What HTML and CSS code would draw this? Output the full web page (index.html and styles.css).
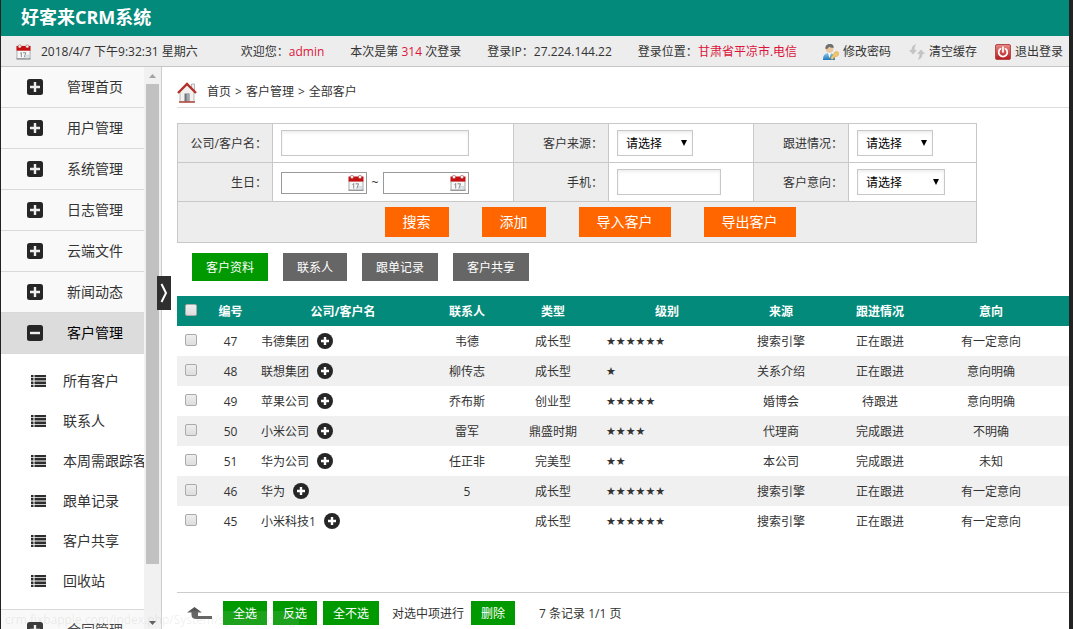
FILE: index.html
```html
<!DOCTYPE html>
<html lang="zh-CN">
<head>
<meta charset="utf-8">
<title>好客来CRM系统</title>
<link rel="stylesheet" href="styles.css">
</head>
<body>
<svg class="sprite" aria-hidden="true">
  <defs>
    <linearGradient id="blue" x1="0" y1="0" x2="0" y2="1"><stop offset="0" stop-color="#8cc8ec"/><stop offset="1" stop-color="#1d78bd"/></linearGradient>
    <linearGradient id="red" x1="0" y1="0" x2="0" y2="1"><stop offset="0" stop-color="#e98b86"/><stop offset="1" stop-color="#b5191d"/></linearGradient>
  </defs>
  <symbol id="calendar" viewBox="0 0 16 16">
    <path d="M1 6h14v9.500H1z" fill="#f7f7f7" stroke="#aaa" stroke-width="1"/>
    <path d="M.5 14.500h15v1.500H.5z" fill="#999"/>
    <path d="M.5 1.500h15V6.500H.5z" fill="#c60d10"/>
    <circle cx="4" cy="2" r="1.700" fill="#eee" stroke="#a33" stroke-width=".5"/>
    <circle cx="12" cy="2" r="1.700" fill="#eee" stroke="#a33" stroke-width=".5"/>
    <path d="M4.500 9.500l1.200-1v5M7.500 8.800h3l-1.700 4.700" fill="none" stroke="#888"/>
    <path d="M10 11.500h4v3h-4z" fill="#dde6ea" stroke="#b8c6cc" stroke-width=".5"/>
  </symbol>
  <symbol id="plus-box" viewBox="0 0 16 16"><rect width="16" height="16" rx="2.500" fill="#262626"/><path d="M8 3v10M3 8h10" stroke="#eee" stroke-width="2.400"/></symbol>
  <symbol id="minus-box" viewBox="0 0 16 16"><rect width="16" height="16" rx="2.500" fill="#262626"/><path d="M3 8h10" stroke="#eee" stroke-width="2.400"/></symbol>
  <symbol id="list" viewBox="0 0 15 12"><path d="M0 1h2.500M0 4.300h2.500M0 7.700h2.500M0 11h2.500M3.500 1H15M3.500 4.300H15M3.500 7.700H15M3.500 11H15" stroke="#2d2d2d" stroke-width="2.400"/></symbol>
  <symbol id="plus-round" viewBox="0 0 16 16"><circle cx="8" cy="8" r="8" fill="#262626"/><path d="M8 4v8M4 8h8" stroke="#fff" stroke-width="2.400"/></symbol>
</svg>
<div class="page">
  <header class="brand"><h1>好客来CRM系统</h1></header>
  <div class="toolbar">
    <div class="clock"><svg class="i14"><use href="#calendar"/></svg><span>2018/4/7 下午9:32:31 星期六</span></div>
    <span>欢迎您：<em>admin</em></span>
    <span>本次是第 <em>314</em> 次登录</span>
    <span>登录IP：27.224.144.22</span>
    <span>登录位置：<em>甘肃省平凉市.电信</em></span>
    <nav class="tools">
      <a href="#"><svg class="i16" viewBox="0 0 16 16"><path d="M0 16c0-5 2-7 6-7s6 2 6 7z" fill="url(#blue)"/><path d="M5 9l1.500 5L8 9z" fill="#fff"/><circle cx="6.500" cy="5" r="3.800" fill="#edc79d"/><path d="M2.500 5C2 1.500 4 0 7 0s4 2 3.500 4C8 4 7 3 6 2.800 5 5 4 5 2.500 5z" fill="#6c706e"/><path d="M8 13l3-3c0-2 2-3 4-2 2 2 0 5-3 4.500L9.500 15.500 8 15z" fill="#f2c56b" stroke="#d39b3e" stroke-width=".5"/></svg>修改密码</a>
      <a href="#"><svg class="i16" viewBox="0 0 16 16"><path d="M7 0C4 1 2.500 3 2.500 6H0l4 4.500L8 6H5.500C5.500 4 6 2 7 0z" fill="#c4c4c4"/><path d="M9 16c3-1 4.500-3 4.500-6H16l-4-4.500L8 10h2.500c0 2-.5 4-1.500 6z" fill="#c4c4c4"/></svg>清空缓存</a>
      <a href="#"><svg class="i16" viewBox="0 0 16 16"><rect x=".5" y=".5" width="15" height="15" rx="1.500" fill="url(#red)" stroke="#b54a4a"/><path d="M5.500 4.800a4.300 4.300 0 1 0 5 0M8 3v5" fill="none" stroke="#fff" stroke-width="1.700" stroke-linecap="round"/></svg>退出登录</a>
    </nav>
  </div>
  <div class="body">
    <aside class="side">
      <nav class="menu">
        <a class="group" href="#"><svg class="i16"><use href="#plus-box"/></svg>管理首页</a>
        <a class="group" href="#"><svg class="i16"><use href="#plus-box"/></svg>用户管理</a>
        <a class="group" href="#"><svg class="i16"><use href="#plus-box"/></svg>系统管理</a>
        <a class="group" href="#"><svg class="i16"><use href="#plus-box"/></svg>日志管理</a>
        <a class="group" href="#"><svg class="i16"><use href="#plus-box"/></svg>云端文件</a>
        <a class="group" href="#"><svg class="i16"><use href="#plus-box"/></svg>新闻动态</a>
        <a class="group open" href="#"><svg class="i16"><use href="#minus-box"/></svg>客户管理</a>
        <div class="sub">
          <a href="#"><svg><use href="#list"/></svg>所有客户</a>
          <a href="#"><svg><use href="#list"/></svg>联系人</a>
          <a href="#"><svg><use href="#list"/></svg>本周需跟踪客户</a>
          <a href="#"><svg><use href="#list"/></svg>跟单记录</a>
          <a href="#"><svg><use href="#list"/></svg>客户共享</a>
          <a href="#"><svg><use href="#list"/></svg>回收站</a>
        </div>
        <a class="group" href="#"><svg class="i16"><use href="#plus-box"/></svg>合同管理</a>
      </nav>
      <div class="scroll">
        <svg viewBox="0 0 17 17"><path d="M5 11l3.500-4L12 11z" fill="#a3a3a3"/></svg>
        <div class="rail"><div class="thumb"></div></div>
        <svg viewBox="0 0 17 17"><path d="M5 9l3.500 4L12 9z" fill="#505050"/></svg>
      </div>
      <button class="handle" type="button" aria-label="收起"><svg viewBox="0 0 14 34"><path d="M4.500 8l4.500 9-4.500 9" fill="none" stroke="#fff" stroke-width="2"/></svg></button>
    </aside>
    <main class="main">
      <div class="crumbs">
        <svg viewBox="0 0 20 21"><path d="M14.500 2h3v6h-3z" fill="#eee" stroke="#999" stroke-width=".7"/><path d="M3 10l7-7 7 7v10H3z" fill="#f3f1ee" stroke="#aaa" stroke-width=".8"/><path d="M7.500 11.500h5V20h-5z" fill="#6f757c"/><path d="M9.500 12H12v8H9.500z" fill="#a1a7ad"/><path d="M1 11l9-9 9 9" fill="none" stroke="#b3312a" stroke-width="2.400"/><path d="M2 20h16" stroke="#b5483c" stroke-width="1.500"/></svg>
        <a href="#">首页</a><span>&gt;</span><a href="#">客户管理</a><span>&gt;</span><a href="#">全部客户</a>
      </div>
      <form class="filter">
        <table>
          <colgroup><col class="lab"><col class="f1"><col class="lab"><col class="f2"><col class="lab"><col class="f3"></colgroup>
          <tr>
            <th><label for="name">公司/客户名：</label></th><td><input class="box wide" id="name" type="text"></td>
            <th><label for="source">客户来源：</label></th><td><div class="pick"><select id="source"><option>请选择</option></select></div></td>
            <th><label for="follow">跟进情况：</label></th><td><div class="pick"><select id="follow"><option>请选择</option></select></div></td>
          </tr>
          <tr>
            <th><label for="from">生日：</label></th>
            <td><div class="range"><span class="date"><input id="from" type="text"><svg><use href="#calendar"/></svg></span><span class="to">~</span><span class="date"><input type="text" aria-label="生日至"><svg><use href="#calendar"/></svg></span></div></td>
            <th><label for="phone">手机：</label></th><td><input class="box short" id="phone" type="text"></td>
            <th><label for="intent">客户意向：</label></th><td><div class="pick"><select class="long" id="intent"><option>请选择</option></select></div></td>
          </tr>
          <tr><td class="actions" colspan="6"><div><button type="button">搜索</button><button type="button">添加</button><button type="button">导入客户</button><button type="button">导出客户</button></div></td></tr>
        </table>
      </form>
      <div class="tabs"><button class="on" type="button">客户资料</button><button type="button">联系人</button><button type="button">跟单记录</button><button type="button">客户共享</button></div>
      <table class="grid">
        <colgroup><col class="c-check"><col class="c-id"><col class="c-name"><col class="c-person"><col class="c-type"><col class="c-level"><col class="c-type"><col class="c-state"><col class="c-intent"><col class="c-end"></colgroup>
        <thead><tr><th><input type="checkbox" aria-label="全选"></th><th>编号</th><th>公司/客户名</th><th>联系人</th><th>类型</th><th>级别</th><th>来源</th><th>跟进情况</th><th>意向</th><th></th></tr></thead>
        <tbody>
          <tr><td><input type="checkbox" aria-label="47"></td><td>47</td><td class="name"><div>韦德集团<svg class="i16"><use href="#plus-round"/></svg></div></td><td>韦德</td><td>成长型</td><td class="stars">★★★★★★</td><td>搜索引擎</td><td>正在跟进</td><td>有一定意向</td><td></td></tr>
          <tr><td><input type="checkbox" aria-label="48"></td><td>48</td><td class="name"><div>联想集团<svg class="i16"><use href="#plus-round"/></svg></div></td><td>柳传志</td><td>成长型</td><td class="stars">★</td><td>关系介绍</td><td>正在跟进</td><td>意向明确</td><td></td></tr>
          <tr><td><input type="checkbox" aria-label="49"></td><td>49</td><td class="name"><div>苹果公司<svg class="i16"><use href="#plus-round"/></svg></div></td><td>乔布斯</td><td>创业型</td><td class="stars">★★★★★</td><td>婚博会</td><td>待跟进</td><td>意向明确</td><td></td></tr>
          <tr><td><input type="checkbox" aria-label="50"></td><td>50</td><td class="name"><div>小米公司<svg class="i16"><use href="#plus-round"/></svg></div></td><td>雷军</td><td>鼎盛时期</td><td class="stars">★★★★</td><td>代理商</td><td>完成跟进</td><td>不明确</td><td></td></tr>
          <tr><td><input type="checkbox" aria-label="51"></td><td>51</td><td class="name"><div>华为公司<svg class="i16"><use href="#plus-round"/></svg></div></td><td>任正非</td><td>完美型</td><td class="stars">★★</td><td>本公司</td><td>完成跟进</td><td>未知</td><td></td></tr>
          <tr><td><input type="checkbox" aria-label="46"></td><td>46</td><td class="name"><div>华为<svg class="i16"><use href="#plus-round"/></svg></div></td><td>5</td><td>成长型</td><td class="stars">★★★★★★</td><td>搜索引擎</td><td>正在跟进</td><td>有一定意向</td><td></td></tr>
          <tr><td><input type="checkbox" aria-label="45"></td><td>45</td><td class="name"><div>小米科技1<svg class="i16"><use href="#plus-round"/></svg></div></td><td></td><td>成长型</td><td class="stars">★★★★★★</td><td>搜索引擎</td><td>正在跟进</td><td>有一定意向</td><td></td></tr>
        </tbody>
      </table>
      <footer class="bulk">
        <svg viewBox="0 0 26 12"><path d="M7.500 0L15 5.500h-4V9h14v3H9.500Q4.500 12 4.500 8V5.500H0z" fill="#555"/></svg>
        <button type="button">全选</button><button type="button">反选</button><button type="button">全不选</button>
        <span class="hint">对选中项进行</span><button type="button">删除</button>
        <span class="count">7 条记录 1/1 页</span>
      </footer>
    </main>
  </div>
  <div class="status">crm.fixbapple.com/index.php/System/system.config</div>
</div>
</body>
</html>
```
FILE: styles.css
```css
* { box-sizing: border-box; }
body {
  margin: 0;
  background: #222;
  color: #333;
  font: 12px/18px "Open Sans", "Noto Sans CJK SC", sans-serif;
}
button, input, select { font: inherit; color: inherit; margin: 0; }
button { border: 0; padding: 0; white-space: nowrap; cursor: pointer; }
a { color: inherit; text-decoration: none; }
em { color: #dc143c; font-style: normal; }
svg { display: block; flex: none; }
.sprite { position: absolute; width: 0; height: 0; }
.i14 { width: 15px; height: 16px; }
.i16 { width: 16px; height: 16px; }

.page {
  display: flex;
  flex-direction: column;
  height: 100vh;
  margin: 0 4px 0 1px;
  background: #fff;
  position: relative;
  overflow: hidden;
}
.brand { flex: none; height: 36px; padding: 0 20px; background: #048a7b; color: #fff; }
.brand h1 { margin: 0; font-size: 18px; line-height: 34px; font-weight: 700; }
.toolbar {
  flex: none;
  display: flex;
  align-items: center;
  gap: 26px;
  height: 31px;
  padding: 2px 7px 0 15px;
  border-bottom: 1px solid #c6c6c6;
  background: #ededed;
  white-space: nowrap;
}
.clock { display: flex; align-items: center; gap: 10px; margin-right: 17px; }
.tools { display: flex; gap: 18px; margin-left: auto; }
.tools a { display: flex; align-items: center; gap: 4px; }

.body { flex: 1; display: flex; min-height: 0; }
.side { flex: none; display: flex; width: 161px; position: relative; border-right: 1px solid #ccc; }
.menu { flex: 1; min-width: 0; overflow: hidden; font-size: 14px; white-space: nowrap; }
.group {
  display: flex;
  align-items: center;
  gap: 24px;
  height: 41px;
  padding-left: 26px;
  border-bottom: 1px solid #d9d9d9;
  background: #f9f9f9;
}
.group.open { background: #dcdcdc; color: #000; }
.sub { padding: 7px 0 8px; border-bottom: 1px solid #d9d9d9; }
.sub a { display: flex; align-items: center; gap: 17px; height: 40px; padding-left: 30px; }
.sub svg { width: 15px; height: 12px; }
.scroll { flex: none; display: flex; flex-direction: column; width: 17px; background: #f1f1f1; }
.scroll svg { width: 17px; height: 17px; }
.rail { flex: 1; padding: 0 2px; }
.thumb { height: 91%; background: #c1c1c1; }
.handle { position: absolute; top: 209px; right: -10px; width: 14px; height: 34px; background: #2f2f2f; }

.main { flex: 1; min-width: 0; display: flex; flex-direction: column; padding-left: 15px; }
.crumbs { display: flex; align-items: center; gap: 4px; height: 41px; padding-top: 10px; border-bottom: 1px solid #ddd; }
.crumbs svg { width: 20px; height: 21px; margin-right: 6px; }

.filter { max-width: 800px; margin-top: 15px; }
.filter table { width: 100%; border-collapse: collapse; table-layout: fixed; }
.lab { width: 95px; }
.f1 { width: 241px; }
.f2 { width: 145px; }
.f3 { width: 128px; }
.filter th, .filter td { height: 39px; padding: 0 0 0 8px; border: 1px solid #c8c8c8; }
.filter th { padding: 2px 5px 0 0; background: #ededed; font-weight: 400; text-align: right; white-space: nowrap; }
.box, .pick select { display: block; height: 26px; border: 1px solid #c8c8c8; background: #fff; box-shadow: inset 0 2px 3px #eee; }
.wide { width: 188px; }
.short { width: 104px; }
.pick { display: flex; position: relative; width: max-content; }
.pick select { width: 76px; padding: 2px 8px 0; color: #000; appearance: none; border-radius: 0; }
.pick .long { width: 88px; }
.pick::after {
  content: "";
  position: absolute;
  top: 10px;
  right: 6px;
  border: solid transparent;
  border-width: 6px 3px 0;
  border-top-color: #000;
  pointer-events: none;
}
.range { display: flex; align-items: center; gap: 4px; padding-top: 2px; }
.to { width: 8px; text-align: center; }
.date { position: relative; }
.date input { display: block; width: 86px; height: 22px; border: 1px solid #999; background: #fff; }
.date svg { position: absolute; right: 3px; top: 3px; width: 16px; height: 16px; }
.filter .actions { height: 41px; padding: 0 0 0 26px; background: #ededed; }
.actions div { display: flex; justify-content: center; gap: 33px; }
.actions button { height: 30px; padding: 0 18px; background: #f60; color: #fff; font-size: 14px; }

.tabs { display: flex; gap: 15px; padding: 10px 0 15px 15px; }
.tabs button { height: 28px; padding: 2px 14px 0; background: #666; color: #fff; }
.tabs .on { background: #090; }

.grid { width: 100%; border-collapse: collapse; table-layout: fixed; text-align: center; white-space: nowrap; }
.c-check { width: 28px; }
.c-id { width: 51px; }
.c-name { width: 174px; }
.c-person { width: 74px; }
.c-type { width: 98px; }
.c-level { width: 130px; }
.c-state { width: 100px; }
.c-intent { width: 122px; }
.c-end { width: 17px; }
.grid th, .grid td { height: 30px; padding: 2px 0 0; }
.grid thead { background: #048a7b; color: #fff; }
.grid tbody tr:nth-child(even) { background: #f0f0f0; }
.grid .name { padding-left: 5px; }
.name div { display: flex; align-items: center; gap: 8px; }
.name svg { margin-bottom: 2px; }
.grid .stars { padding-left: 4px; text-align: left; font-family: "DejaVu Sans", sans-serif; font-size: 11px; }
.grid input {
  display: block;
  width: 12px;
  height: 12px;
  margin: 0 auto 4px;
  appearance: none;
  border: 1px solid #aaa;
  border-radius: 2px;
  background: linear-gradient(#eee, #ddd);
}

.bulk { display: flex; align-items: center; gap: 6px; height: 37px; margin-top: auto; padding: 4px 0 0 10px; border-top: 1px solid #ccc; }
.bulk svg { width: 26px; height: 12px; margin-right: 4px; }
.bulk button { height: 24px; padding: 2px 10px 0; background: #090; color: #fff; }
.bulk span { padding-top: 2px; }
.hint { margin: 0 1px 0 7px; }
.count { margin-left: 18px; }

.status {
  position: absolute;
  left: 0;
  bottom: 0;
  height: 18px;
  padding: 0 4px;
  background: rgba(255, 255, 255, .1);
  color: rgba(120, 120, 120, .13);
  pointer-events: none;
}
```
